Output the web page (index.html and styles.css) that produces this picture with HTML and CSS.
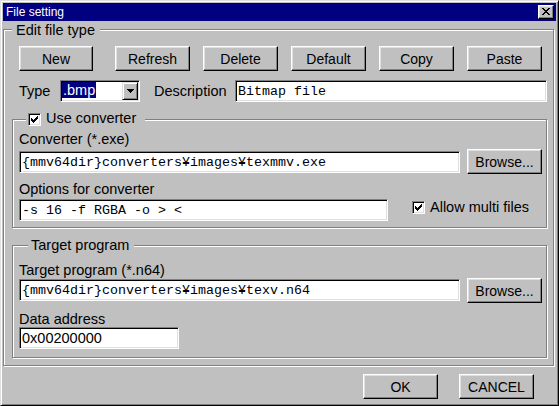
FILE: index.html
```html
<!DOCTYPE html>
<html>
<head>
<meta charset="utf-8">
<link rel="stylesheet" href="styles.css">
</head>
<body>
<div class="window">
  <div class="titlebar">
    <span class="title">File setting</span>
    <span class="close">
      <svg width="8" height="7" viewBox="0 0 8 7" shape-rendering="crispEdges">
        <rect x="0" y="0" width="2" height="1"/><rect x="6" y="0" width="2" height="1"/>
        <rect x="1" y="1" width="2" height="1"/><rect x="5" y="1" width="2" height="1"/>
        <rect x="2" y="2" width="4" height="1"/>
        <rect x="3" y="3" width="2" height="1"/>
        <rect x="2" y="4" width="4" height="1"/>
        <rect x="1" y="5" width="2" height="1"/><rect x="5" y="5" width="2" height="1"/>
        <rect x="0" y="6" width="2" height="1"/><rect x="6" y="6" width="2" height="1"/>
      </svg>
    </span>
  </div>

  <div class="group outer">
    <div class="legend legend-edit">Edit file type</div>
    <div class="btnrow">
      <div class="btn btn-new">New</div>
      <div class="btn">Refresh</div>
      <div class="btn">Delete</div>
      <div class="btn">Default</div>
      <div class="btn">Copy</div>
      <div class="btn">Paste</div>
    </div>
    <div class="typerow">
      <span class="type-lbl">Type</span>
      <div class="combo">
        <span class="sel">.bmp</span>
        <span class="dd">
          <svg width="7" height="4" viewBox="0 0 7 4" shape-rendering="crispEdges">
            <rect x="0" y="0" width="7" height="1"/><rect x="1" y="1" width="5" height="1"/>
            <rect x="2" y="2" width="3" height="1"/><rect x="3" y="3" width="1" height="1"/>
          </svg>
        </span>
      </div>
      <span class="desc-lbl">Description</span>
      <div class="field mono desc">Bitmap file</div>
    </div>

    <div class="group conv">
      <div class="legend legend-conv">
        <span class="chk">
          <svg width="7" height="7" viewBox="0 0 7 7" shape-rendering="crispEdges">
            <rect x="0" y="2" width="1" height="3"/><rect x="1" y="3" width="1" height="3"/>
            <rect x="2" y="4" width="1" height="3"/><rect x="3" y="3" width="1" height="3"/>
            <rect x="4" y="2" width="1" height="3"/><rect x="5" y="1" width="1" height="3"/>
            <rect x="6" y="0" width="1" height="3"/>
          </svg>
        </span>
        <span>Use converter</span>
      </div>
      <div class="lbl">Converter (*.exe)</div>
      <div class="row row-btn">
        <div class="field mono path">{mmv64dir}converters¥images¥texmmv.exe</div>
        <div class="btn browse">Browse...</div>
      </div>
      <div class="lbl lbl-opts">Options for converter</div>
      <div class="row row-opts">
        <div class="field mono opts">-s 16 -f RGBA -o &gt; &lt;</div>
        <div class="multi">
          <span class="chk">
            <svg width="7" height="7" viewBox="0 0 7 7" shape-rendering="crispEdges">
              <rect x="0" y="2" width="1" height="3"/><rect x="1" y="3" width="1" height="3"/>
              <rect x="2" y="4" width="1" height="3"/><rect x="3" y="3" width="1" height="3"/>
              <rect x="4" y="2" width="1" height="3"/><rect x="5" y="1" width="1" height="3"/>
              <rect x="6" y="0" width="1" height="3"/>
            </svg>
          </span>
          <span class="multi-text">Allow multi files</span>
        </div>
      </div>
    </div>

    <div class="group target">
      <div class="legend legend-target">Target program</div>
      <div class="lbl">Target program (*.n64)</div>
      <div class="row row-target">
        <div class="field mono path">{mmv64dir}converters¥images¥texv.n64</div>
        <div class="btn browse">Browse...</div>
      </div>
      <div class="lbl lbl-data">Data address</div>
      <div class="field addr">0x00200000</div>
    </div>
  </div>

  <div class="footer">
    <div class="btn">OK</div>
    <div class="btn">CANCEL</div>
  </div>
</div>
</body>
</html>
```

FILE: styles.css
```css
* { box-sizing: border-box; }
html, body { margin: 0; padding: 0; }
body {
  background: #c0c0c0;
  font-family: "Liberation Sans", Arial, sans-serif;
  font-size: 14.5px;
  color: #000;
}

.window {
  width: 559px;
  height: 406px;
  border: 1px solid;
  border-color: #dfdfdf #000 #000 #dfdfdf;
  box-shadow: inset 1px 1px #fff, inset -1px -1px #808080;
  padding: 2px;
  display: flex;
  flex-direction: column;
  background: #c0c0c0;
}

.titlebar {
  height: 18px;
  background: #000080;
  color: #fff;
  display: flex;
  align-items: center;
  padding-left: 3px;
  font-size: 12px;
}
.close {
  margin-left: auto;
  margin-right: 2px;
  width: 16px;
  height: 14px;
  background: #c0c0c0;
  border: 1px solid;
  border-color: #fff #000 #000 #fff;
  box-shadow: inset -1px -1px #808080, inset 1px 1px #dfdfdf;
  padding: 2px 0 0 3px;
}
.close svg, .dd svg, .chk svg { display: block; }

.group {
  border: 1px solid #808080;
  box-shadow: inset 1px 1px #fff, 1px 1px #fff;
  display: flex;
  flex-direction: column;
}
.legend {
  align-self: flex-start;
  background: #c0c0c0;
  height: 16px;
  line-height: 16px;
  white-space: nowrap;
  display: flex;
  align-items: flex-start;
}
.outer {
  margin: 8px 2px 0 0;
  padding: 0 6px 7px 8px;
}
.legend-edit {
  margin: -8px 0 8px 0;
  padding: 0 5px 0 4px;
}

.btn {
  width: 75px;
  height: 25px;
  flex-shrink: 0;
  border: 1px solid;
  border-color: #fff #000 #000 #fff;
  box-shadow: inset -1px -1px #808080, inset 1px 1px #dfdfdf;
  display: flex;
  align-items: center;
  justify-content: center;
  font-size: 14px;
  background: #c0c0c0;
}
.btnrow {
  display: flex;
  gap: 13px;
  margin-left: 7px;
}
.btn-new { width: 74px; margin-right: 9px; }

.typerow {
  display: flex;
  align-items: center;
  height: 22px;
  margin: 9px 0 0 7px;
}
.type-lbl { width: 41px; flex-shrink: 0; }
.desc-lbl { width: 81px; margin-left: 14px; flex-shrink: 0; }

.field {
  height: 22px;
  flex-shrink: 0;
  background: #fff;
  border: 1px solid;
  border-color: #808080 #fff #fff #808080;
  box-shadow: inset 1px 1px #000, inset -1px -1px #dfdfdf;
  padding: 0 2px;
  display: flex;
  align-items: center;
  white-space: nowrap;
  overflow: hidden;
}
.mono {
  font-family: "Liberation Mono", "DejaVu Sans Mono", monospace;
  font-size: 13.33px;
}
.desc { width: 312px; }

.combo {
  width: 80px;
  height: 22px;
  flex-shrink: 0;
  background: #fff;
  border: 1px solid;
  border-color: #808080 #fff #fff #808080;
  box-shadow: inset 1px 1px #000, inset -1px -1px #dfdfdf;
  padding: 1px;
  display: flex;
  align-items: flex-start;
}
.sel {
  background: #000080;
  color: #fff;
  height: 16px;
  line-height: 16px;
  padding: 0 1px 0 1px;
}
.dd {
  margin-left: auto;
  width: 16px;
  height: 18px;
  background: #c0c0c0;
  border: 1px solid;
  border-color: #dfdfdf #000 #000 #dfdfdf;
  box-shadow: inset 1px 1px #fff, inset -1px -1px #808080;
  padding: 6px 0 0 4px;
}

.conv {
  margin-top: 17px;
  padding: 0 6px 6px 6px;
}
.legend-conv {
  margin: -10px 0 5px 7px;
  padding: 0 9px 0 2px;
}
.legend-conv .chk { margin: 3px 5px 0 0; }

.chk {
  width: 13px;
  height: 13px;
  flex-shrink: 0;
  background: #fff;
  border: 1px solid;
  border-color: #808080 #fff #fff #808080;
  box-shadow: inset 1px 1px #000, inset -1px -1px #dfdfdf;
  padding: 2px;
}

.lbl {
  height: 16px;
  line-height: 16px;
  white-space: nowrap;
}
.row {
  display: flex;
  align-items: flex-start;
}
.row-btn { margin-top: 2px; }
.row-btn .field { margin-top: 2px; }
.path { width: 441px; }
.browse { margin-left: 7px; }
.lbl-opts { margin-top: 7px; }
.row-opts { margin-top: 2px; }
.opts { width: 369px; }
.multi {
  margin-left: 24px;
  display: flex;
  align-items: flex-start;
  gap: 5px;
  line-height: 16px;
  white-space: nowrap;
}
.multi .chk { margin-top: 2px; }

.target {
  margin-top: 17px;
  padding: 0 6px 8px 6px;
}
.legend-target {
  margin: -9px 0 9px 9px;
  padding: 0 5px 0 3px;
}
.row-target .field { margin-top: 1px; }
.lbl-data { margin-top: 8px; }
.addr { width: 160px; }

.footer {
  display: flex;
  justify-content: flex-end;
  gap: 21px;
  margin-top: 8px;
  padding-right: 22px;
}
```
